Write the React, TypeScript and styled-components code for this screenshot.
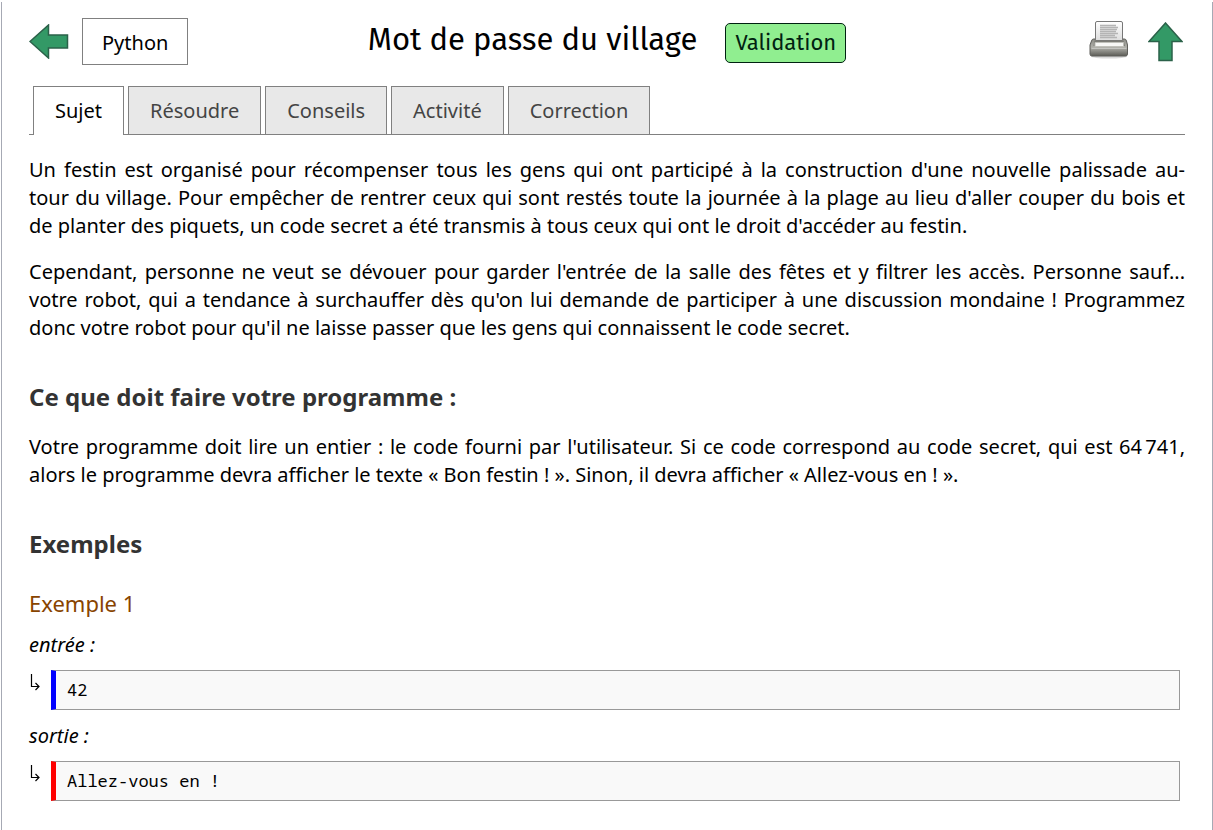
import React from 'react';
import styled, { createGlobalStyle } from 'styled-components';

const GlobalStyle = createGlobalStyle`
  *, *::before, *::after { box-sizing: border-box; }
  body {
    margin: 0;
    background: #fff;
    color: #000;
    font-family: "Noto Sans", sans-serif;
    font-size: 20px;
    line-height: 28px;
  }
`;

const Frame = styled.main`
  margin: 2px 0 0 1px;
  padding: 16px 27px 28px;
  min-height: calc(100vh - 2px);
  border: solid #a6a9b4;
  border-width: 0 1px;
`;

const Header = styled.header`
  display: grid;
  grid-template-columns: 1fr auto 1fr;
  align-items: center;
`;

const HeaderSide = styled.nav<{ $end?: boolean }>`
  display: flex;
  align-items: center;
  justify-content: ${p => (p.$end ? 'flex-end' : 'flex-start')};
  gap: ${p => (p.$end ? 18 : 13)}px;
  padding-right: ${p => (p.$end ? 2 : 0)}px;
`;

const IconLink = styled.a`
  display: flex;
`;

const CourseLink = styled.a`
  display: block;
  padding: 10px 19px 7px;
  border: 1px solid #808080;
  color: #000;
  text-decoration: none;
`;

const TitleGroup = styled.div`
  display: flex;
  align-items: flex-end;
  gap: 28px;
`;

const Title = styled.h1`
  margin: 0;
  padding-bottom: 3px;
  font-family: "Fira Sans", Roboto, sans-serif;
  font-size: 31px;
  font-weight: 400;
  line-height: 40px;
`;

const Badge = styled.span`
  padding: 5px 9px;
  border: 1px solid #021;
  border-radius: 5px;
  background: #90ee90;
  color: #021;
  font-family: "Fira Sans", Roboto, sans-serif;
  font-size: 22px;
`;

const Tabs = styled.nav`
  display: flex;
  gap: 4px;
  margin-top: 21px;
  padding-left: 4px;
  border-bottom: 1px solid #808080;
`;

const Tab = styled.a<{ $active?: boolean }>`
  margin-bottom: ${p => (p.$active ? -1 : 0)}px;
  padding: 10px 21px ${p => (p.$active ? 10 : 9)}px;
  border: 1px solid #808080;
  border-bottom: 0;
  background: ${p => (p.$active ? '#fff' : '#e8e8e8')};
  color: ${p => (p.$active ? '#000' : '#444')};
  text-decoration: none;
`;

const Paragraph = styled.p`
  margin: 0 0 18px;
  text-align: justify;
`;

const Statement = styled.section`
  padding-top: 21px;
`;

const Heading = styled.h2`
  margin: 39px 0 20px;
  color: #333;
  font-size: 24px;
  font-weight: 700;
  line-height: 32px;
`;

const ExampleHeading = styled.h3`
  margin: 27px 0 12px;
  color: #884400;
  font-size: 22px;
  font-weight: 400;
  line-height: 32px;
`;

const StreamLabel = styled.p`
  margin: 0;
  font-style: italic;
`;

const StreamRow = styled.div`
  display: flex;
  gap: 10px;
  margin: 11px 5px 12px 0;
`;

const Stream = styled.pre<{ $color: string }>`
  flex: 1;
  margin: 0;
  padding: 9px 11px;
  border: 1px solid #999;
  border-left: 5px solid ${p => p.$color};
  background: #f9f9f9;
  font-family: "Noto Sans Mono", "DejaVu Sans Mono", monospace;
  font-size: 17px;
  line-height: 20px;
`;

const Arrow = ({ up }: { up?: boolean }) => (
  <svg width={up ? 35 : 40} height={up ? 40 : 35} viewBox={up ? '0 0 35 40' : '0 0 40 35'} aria-hidden="true">
    <path
      d={up ? 'M17.5 1 34 19.500H24V38.500H11V19.500H1Z' : 'M1 17.500 19.500 1V11H38.500V24H19.500V34Z'}
      fill="#339966"
      stroke="#2b6149"
      strokeWidth="1.500"
    />
  </svg>
);

const Hook = () => (
  <svg width="12" height="24" viewBox="0 0 12 24" fill="none" stroke="#000" strokeWidth="1.200" aria-hidden="true">
    <path d="M2.500 4V16.500H10M6.500 13 10 16.500 6.500 20" />
  </svg>
);

const Printer = () => (
  <svg width="41" height="44" viewBox="0 0 41 44" aria-hidden="true">
    <defs>
      <linearGradient id="body" x1="0" y1="0" x2="0" y2="1">
        <stop offset="0" stopColor="#8c8c86" />
        <stop offset="0.5" stopColor="#b0b0aa" />
        <stop offset="1" stopColor="#5c5c56" />
      </linearGradient>
      <linearGradient id="sheet" x1="0" y1="0" x2="0" y2="1">
        <stop offset="0" stopColor="#fff" />
        <stop offset="1" stopColor="#ddd" />
      </linearGradient>
    </defs>
    <ellipse cx="20" cy="36.500" rx="18" ry="2" fill="#000" opacity="0.15" />
    <path d="M4.500 19H35.500Q37 19 37.500 21L38.500 25V34Q38.500 36 36.500 36H3Q1 36 1 34V25L2.500 21Q3 19 4.500 19Z" fill="url(#body)" stroke="#5e5e5a" />
    <path d="M8 1.500H32Q33.500 1.500 33.500 3V20.500H6.500V3Q6.500 1.500 8 1.500Z" fill="url(#sheet)" stroke="#777" />
    <path d="M11 5.500H27M11 7.500H29M11 9.500H28M11 11.500H27M11 13.500H29M11 15.500H26M11 17.500H28" stroke="#b4b4b4" strokeWidth="1.600" />
    <path d="M5.500 20.500H34.500L36 26H4.500Z" fill="#7c7c76" />
    <path d="M6 22.500H34.500V26.500H6Z" fill="#f7f7f5" stroke="#c0c0ba" />
    <path d="M2.500 28.500H37.500" stroke="#c4c4c0" />
  </svg>
);

const tabs = ['Sujet', 'Résoudre', 'Conseils', 'Activité', 'Correction'];

const streams = [
  { label: 'entrée :', text: '42', color: '#00f' },
  { label: 'sortie :', text: 'Allez-vous en !', color: '#f00' },
];

export default function App() {
  return (
    <>
      <GlobalStyle />
      <Frame lang="fr">
        <Header>
          <HeaderSide>
            <IconLink href="#precedent" aria-label="Précédent"><Arrow /></IconLink>
            <CourseLink href="#python">Python</CourseLink>
          </HeaderSide>
          <TitleGroup>
            <Title>Mot de passe du village</Title>
            <Badge>Validation</Badge>
          </TitleGroup>
          <HeaderSide $end>
            <IconLink href="#imprimer" aria-label="Imprimer"><Printer /></IconLink>
            <IconLink href="#haut" aria-label="Remonter"><Arrow up /></IconLink>
          </HeaderSide>
        </Header>
        <Tabs>
          {tabs.map((name, i) => (
            <Tab key={name} href={`#${name.toLowerCase()}`} $active={i === 0} aria-current={i === 0 ? 'page' : undefined}>
              {name}
            </Tab>
          ))}
        </Tabs>
        <Statement>
          <Paragraph>
            Un festin est organisé pour récompenser tous les gens qui ont participé à la construction d'une nouvelle
            palissade au&shy;tour&nbsp;du&nbsp;village. Pour empêcher de rentrer ceux qui sont restés toute la journée à
            la plage au lieu d'aller couper du bois et de&nbsp;planter des piquets, un code secret a été transmis à tous
            ceux qui ont le droit d'accéder au festin.
          </Paragraph>
          <Paragraph>
            Cependant, personne ne veut se dévouer pour garder l'entrée de la salle des fêtes et y filtrer les accès.
            Personne sauf... votre robot, qui a tendance à surchauffer dès qu'on lui demande de participer à une
            discussion mondaine&nbsp;! Programmez donc votre robot pour qu'il ne laisse passer que les gens qui
            connaissent le code secret.
          </Paragraph>
          <Heading>Ce que doit faire votre programme&nbsp;:</Heading>
          <Paragraph>
            Votre programme doit lire un entier&nbsp;: le code fourni par l'utilisateur. Si ce code correspond au code
            secret, qui est 64&#8239;741, alors le programme devra afficher le texte «&nbsp;Bon festin&nbsp;!&nbsp;».
            Sinon, il devra afficher «&nbsp;Allez-vous en&nbsp;!&nbsp;».
          </Paragraph>
          <Heading>Exemples</Heading>
          <ExampleHeading>Exemple 1</ExampleHeading>
          {streams.map(s => (
            <React.Fragment key={s.label}>
              <StreamLabel>{s.label}</StreamLabel>
              <StreamRow>
                <Hook />
                <Stream $color={s.color}>{s.text}</Stream>
              </StreamRow>
            </React.Fragment>
          ))}
        </Statement>
      </Frame>
    </>
  );
}
